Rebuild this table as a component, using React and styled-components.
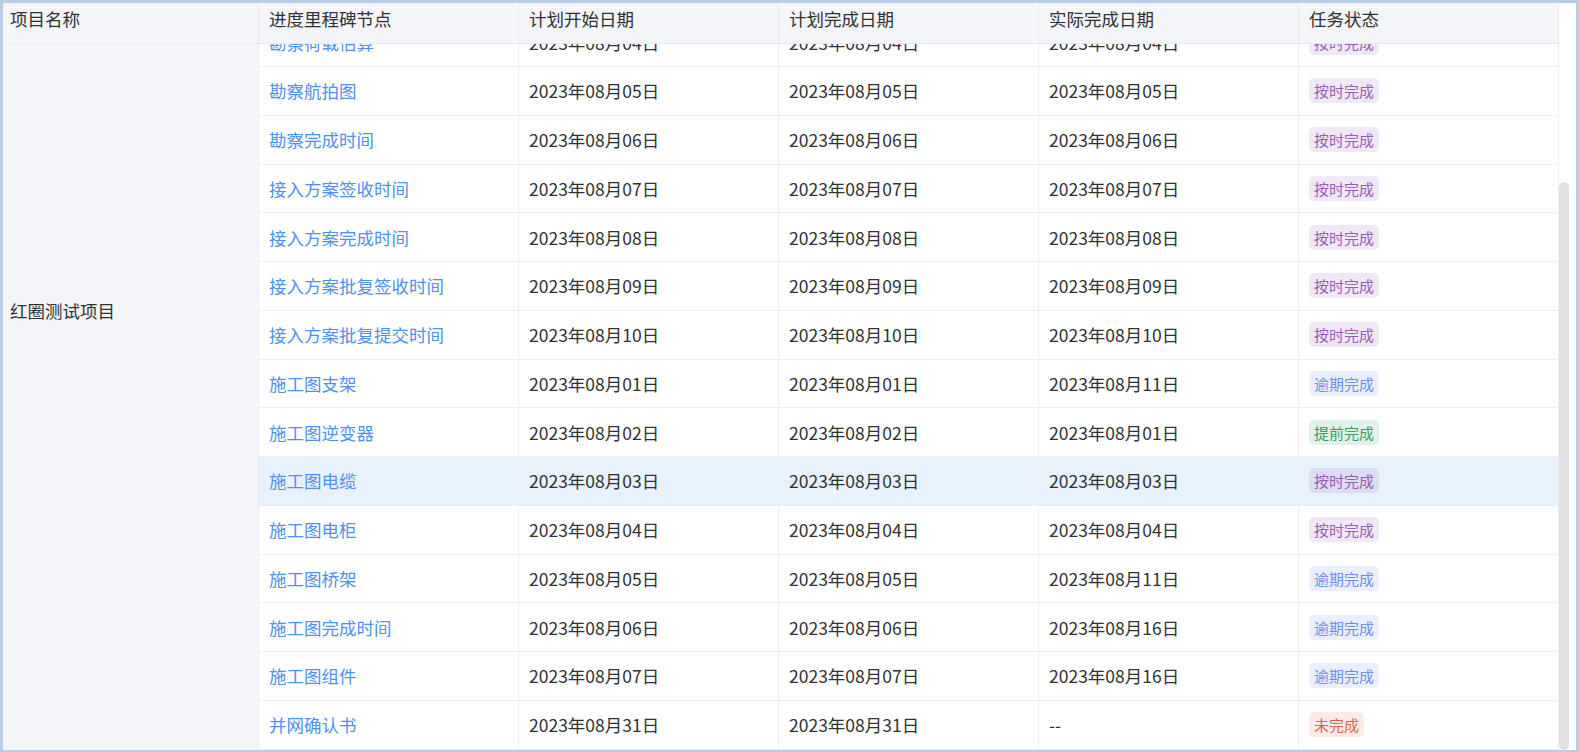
import React, { useLayoutEffect, useRef, useState } from 'react';
import styled, { createGlobalStyle, css } from 'styled-components';

const GlobalStyle = createGlobalStyle`
  html, body {
    margin: 0;
    padding: 0;
    background: #ffffff;
  }
  body {
    font-family: "Noto Sans CJK SC", "Noto Sans", sans-serif;
    font-size: 17.5px;
    color: #303133;
  }
  * {
    box-sizing: border-box;
  }
`;

const FIRST_COL = 256;
const COL = 260;
const ROW_H = 48.75;
const BODY_H = 706;

const Frame = styled.div`
  width: 1579px;
  height: 752px;
  border: 3px solid #b6cde8;
  border-bottom-width: 2px;
  padding-right: 7px;
  background: #ffffff;
  display: flex;
  flex-direction: column;
  overflow: hidden;
`;

const HeaderRow = styled.div`
  display: grid;
  grid-template-columns: ${FIRST_COL}px repeat(5, ${COL}px);
  width: ${FIRST_COL + COL * 5}px;
  height: 41px;
  background: #f3f5f9;
  border-bottom: 1px solid #e6e9ef;
  flex-shrink: 0;
`;

const HeadCell = styled.div`
  padding: 4px 0 0 ${(p) => (p.$first ? 7 : 10)}px;
  line-height: 23px;
  color: #303133;
  border-right: 1px solid #e6e9ef;
  white-space: nowrap;
`;

const BodyWrap = styled.div`
  display: flex;
  height: ${BODY_H}px;
`;

const ScrollBody = styled.div`
  width: ${FIRST_COL + COL * 5}px;
  height: 100%;
  overflow-y: scroll;
  overflow-x: hidden;
  scrollbar-width: none;

  &::-webkit-scrollbar {
    display: none;
  }
`;

const Track = styled.div`
  position: relative;
  width: 10px;
  height: 100%;
  background: #ffffff;
`;

const Thumb = styled.div`
  position: absolute;
  left: 0;
  width: 10px;
  background: #e1e1e1;
  border-radius: 5px;
`;

const BodyInner = styled.div`
  display: flex;
  width: ${FIRST_COL + COL * 5}px;
`;

const ProjectCell = styled.div`
  width: ${FIRST_COL}px;
  flex-shrink: 0;
  background: #f3f5f9;
  border-right: 1px solid #ebeef5;
  display: flex;
  align-items: center;
  padding-left: 7px;
  line-height: 23px;
`;

const Rows = styled.div`
  display: flex;
  flex-direction: column;
`;

const Row = styled.div`
  display: grid;
  grid-template-columns: repeat(5, ${COL}px);
  height: ${ROW_H}px;
  border-bottom: 1px solid #ebeef5;
  background: ${(p) => (p.$active ? '#e8f2fc' : '#ffffff')};
`;

const Cell = styled.div`
  display: flex;
  align-items: center;
  padding-left: 10px;
  border-right: 1px solid #ebeef5;
  line-height: 23px;
  white-space: nowrap;
  color: #303133;
`;

const NodeLink = styled(Cell)`
  color: #4e90f3;
  cursor: pointer;
`;

const tagTones = {
  ontime: css`
    color: #9a5db5;
    background: rgba(150, 90, 190, 0.14);
  `,
  late: css`
    color: #6d8ef0;
    background: rgba(90, 125, 240, 0.13);
  `,
  early: css`
    color: #3a9d69;
    background: rgba(50, 165, 105, 0.15);
  `,
  undone: css`
    color: #e0654f;
    background: rgba(230, 90, 60, 0.13);
  `,
};

const Tag = styled.span`
  display: inline-block;
  height: 25px;
  line-height: 25px;
  padding: 0 5px;
  border-radius: 5px;
  font-size: 15px;
  ${(p) => tagTones[p.$tone]}
`;

const tagText = {
  ontime: '按时完成',
  late: '逾期完成',
  early: '提前完成',
  undone: '未完成',
};

const d = (n) => `2023年08月${String(n).padStart(2, '0')}日`;

const rows = [
  ['勘察派单时间', 1, 1, 1, 'ontime'],
  ['勘察签收时间', 2, 2, 2, 'ontime'],
  ['勘察踏勘时间', 3, 3, 3, 'ontime'],
  ['勘察荷载估算', 4, 4, 4, 'ontime'],
  ['勘察航拍图', 5, 5, 5, 'ontime'],
  ['勘察完成时间', 6, 6, 6, 'ontime'],
  ['接入方案签收时间', 7, 7, 7, 'ontime'],
  ['接入方案完成时间', 8, 8, 8, 'ontime'],
  ['接入方案批复签收时间', 9, 9, 9, 'ontime'],
  ['接入方案批复提交时间', 10, 10, 10, 'ontime'],
  ['施工图支架', 1, 1, 11, 'late'],
  ['施工图逆变器', 2, 2, 1, 'early'],
  ['施工图电缆', 3, 3, 3, 'ontime', true],
  ['施工图电柜', 4, 4, 4, 'ontime'],
  ['施工图桥架', 5, 5, 11, 'late'],
  ['施工图完成时间', 6, 6, 16, 'late'],
  ['施工图组件', 7, 7, 16, 'late'],
  ['并网确认书', 31, 31, null, 'undone'],
];

const headers = ['项目名称', '进度里程碑节点', '计划开始日期', '计划完成日期', '实际完成日期', '任务状态'];

export default function App() {
  const bodyRef = useRef(null);
  const [thumb, setThumb] = useState({ top: 0, height: 0 });

  // 根据滚动位置计算滚动条
  const syncThumb = () => {
    const el = bodyRef.current;
    if (!el) return;
    const ratio = el.clientHeight / el.scrollHeight;
    setThumb({
      top: el.scrollTop * ratio,
      height: Math.max(el.clientHeight * ratio, 20),
    });
  };

  // 滚动到底部，与截图一致
  useLayoutEffect(() => {
    const el = bodyRef.current;
    if (el) el.scrollTop = el.scrollHeight;
    syncThumb();
  }, []);

  return (
    <>
      <GlobalStyle />
      <Frame>
        <HeaderRow>
          {headers.map((h, i) => (
            <HeadCell key={h} $first={i === 0}>{h}</HeadCell>
          ))}
        </HeaderRow>
        <BodyWrap>
          <ScrollBody ref={bodyRef} onScroll={syncThumb}>
            <BodyInner>
              <ProjectCell>红圈测试项目</ProjectCell>
              <Rows>
                {rows.map(([name, start, end, actual, tone, active]) => (
                  <Row key={name} $active={active}>
                    <NodeLink>{name}</NodeLink>
                    <Cell>{d(start)}</Cell>
                    <Cell>{d(end)}</Cell>
                    <Cell>{actual ? d(actual) : '--'}</Cell>
                    <Cell>
                      <Tag $tone={tone}>{tagText[tone]}</Tag>
                    </Cell>
                  </Row>
                ))}
              </Rows>
            </BodyInner>
          </ScrollBody>
          <Track>
            <Thumb style={{ top: thumb.top, height: thumb.height }} />
          </Track>
        </BodyWrap>
      </Frame>
    </>
  );
}
